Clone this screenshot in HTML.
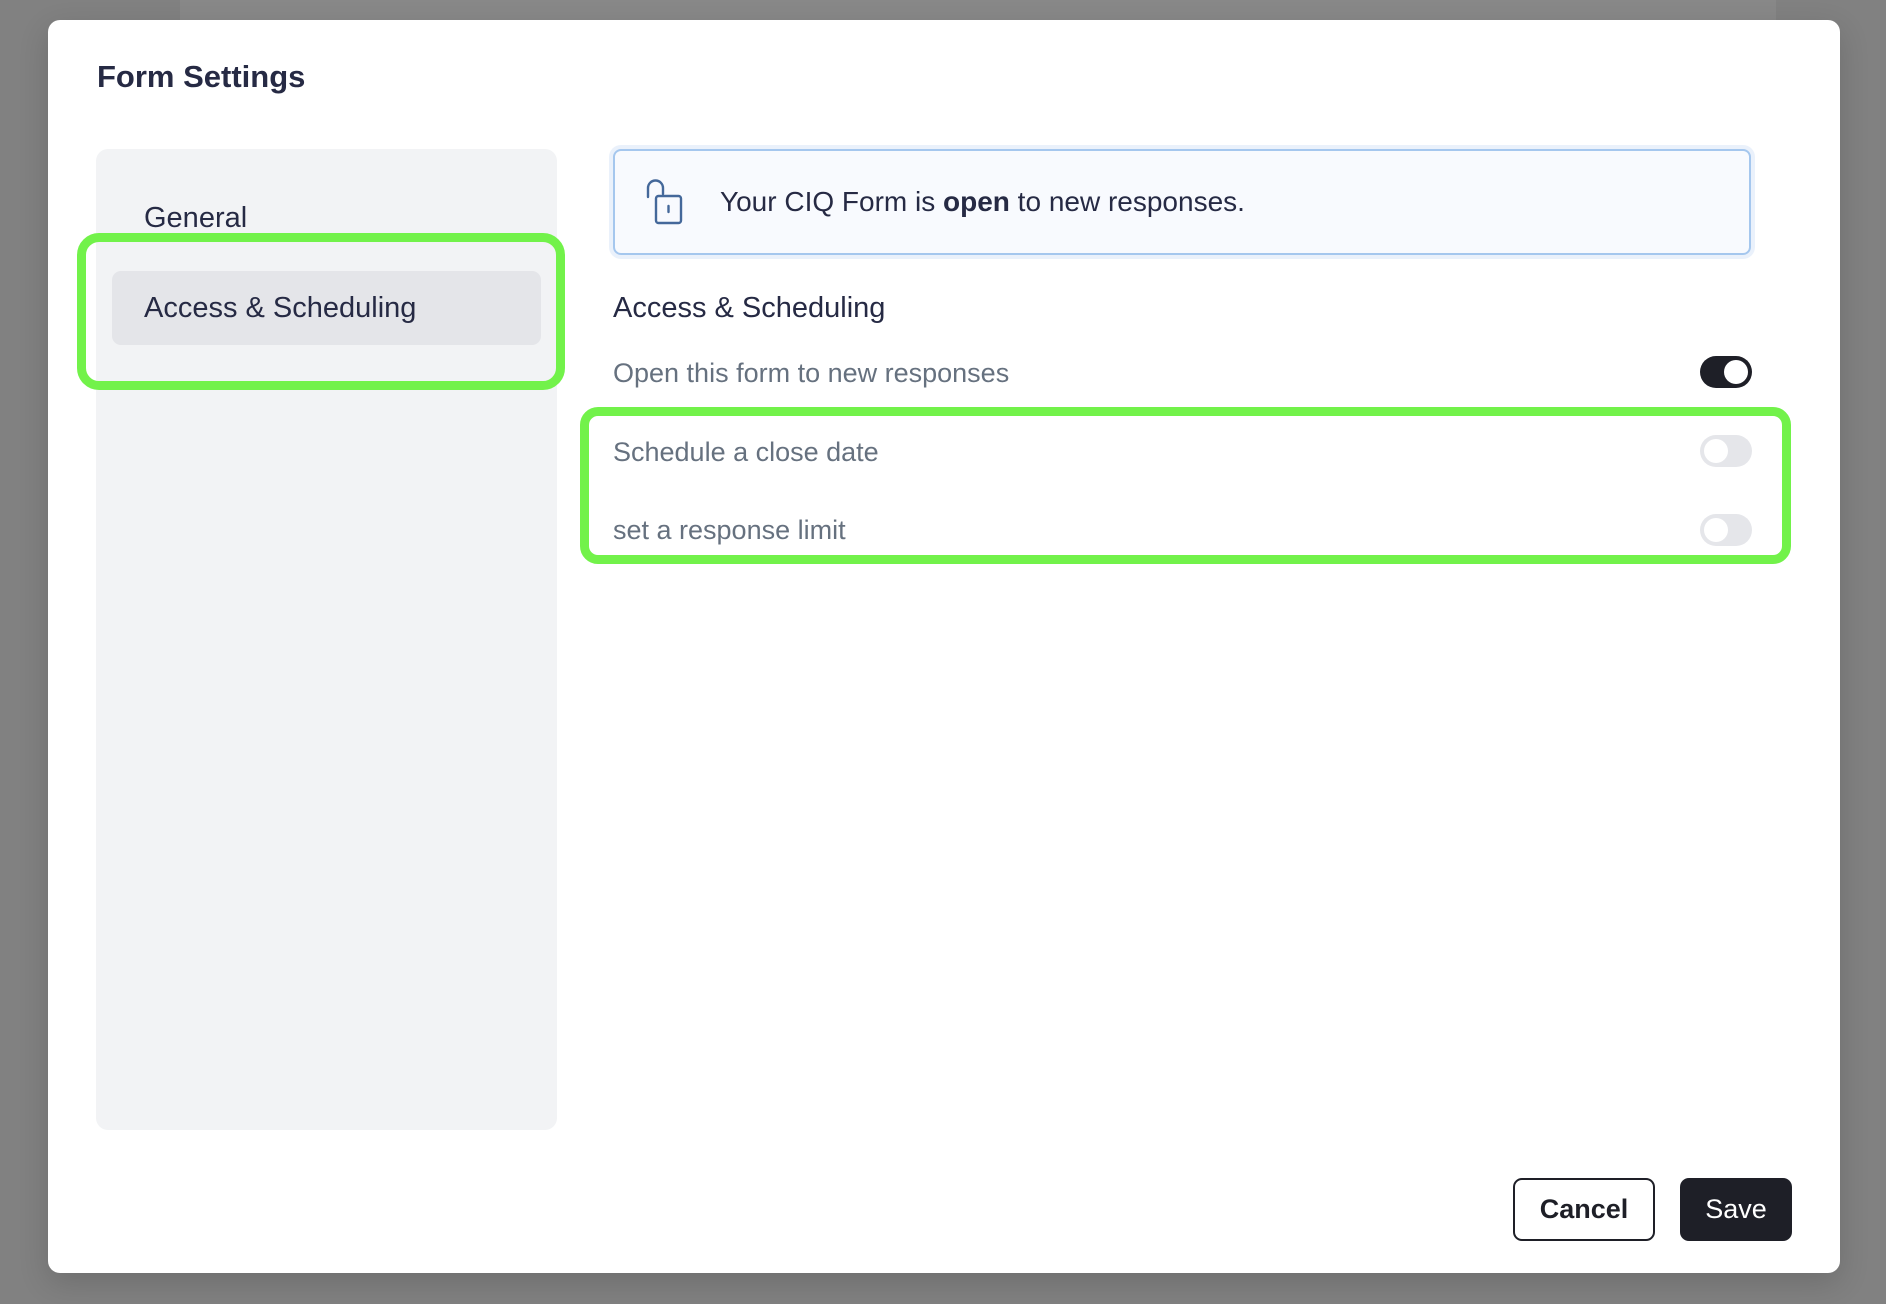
<!DOCTYPE html>
<html><head><meta charset="utf-8"><style>
*{margin:0;padding:0;box-sizing:border-box}
body{width:1886px;height:1304px;background:#818181;position:relative;overflow:hidden;font-family:"Liberation Sans",sans-serif;color:#262a44}
.strip{position:absolute;left:180px;top:0;width:1596px;height:30px;background:#888}
.modal{position:absolute;left:48px;top:20px;width:1792px;height:1253px;background:#fff;border-radius:12px;box-shadow:0 10px 30px rgba(0,0,0,.15)}
.abs{position:absolute}
.t{height:40px;line-height:40px;white-space:nowrap}
.title{left:97px;top:57px;font-size:31px;font-weight:bold;color:#262a44}
.side{left:96px;top:149px;width:461px;height:981px;background:#f2f3f5;border-radius:12px}
.sel{left:112px;top:271px;width:429px;height:74px;background:#e4e5e9;border-radius:9px}
.navt{font-size:29px;color:#262a44}
.green{border:9px solid #72f24a}
.banner{left:613px;top:149px;width:1138px;height:106px;background:#f8fafe;border:2px solid #a5c7ee;border-radius:8px;box-shadow:0 0 0 4px #eaf1fb}
.row{font-size:27px;color:#66717f}
.tog{width:52px;height:32px;border-radius:16px}
.on{background:#1e1f27}
.on::after{content:"";position:absolute;right:4px;top:4px;width:24px;height:24px;border-radius:50%;background:#fff}
.off{background:#e5e6ea}
.off::after{content:"";position:absolute;left:4px;top:4px;width:24px;height:24px;border-radius:50%;background:#fff}
.btn{top:1178px;height:63px;border-radius:9px;font-size:27px;font-weight:bold;display:flex;align-items:center;justify-content:center}
</style></head><body>
<div class="strip"></div>
<div class="modal"></div>
<div class="abs t title">Form Settings</div>
<div class="abs side"></div>
<div class="abs t navt" style="left:144px;top:198px">General</div>
<div class="abs sel"></div>
<div class="abs t navt" style="left:144px;top:288px">Access &amp; Scheduling</div>
<div class="abs green" style="left:77px;top:233px;width:488px;height:157px;border-radius:22px"></div>

<div class="abs banner"></div>
<svg class="abs" style="left:641px;top:178px" width="48" height="48" viewBox="0 0 40 48" fill="none" stroke="#44689a" stroke-width="2.4" stroke-linecap="round">
<path d="M3 19 V10 A7.5 7.5 0 0 1 18 10 V16"/>
<rect x="11" y="18" width="25" height="27" rx="2.5"/>
<path d="M23.5 28 V34"/>
</svg>
<div class="abs t" style="left:720px;top:182px;font-size:28px;color:#262a44">Your CIQ Form is <b>open</b> to new responses.</div>

<div class="abs t" style="left:613px;top:288px;font-size:29px;color:#262a44">Access &amp; Scheduling</div>
<div class="abs t row" style="left:613px;top:353px">Open this form to new responses</div>
<div class="abs tog on" style="left:1700px;top:356px"></div>
<div class="abs t row" style="left:613px;top:432px">Schedule a close date</div>
<div class="abs tog off" style="left:1700px;top:435px"></div>
<div class="abs t row" style="left:613px;top:510px">set a response limit</div>
<div class="abs tog off" style="left:1700px;top:514px"></div>
<div class="abs green" style="left:580px;top:407px;width:1211px;height:157px;border-radius:18px"></div>

<div class="abs btn" style="left:1513px;width:142px;border:2px solid #1e1f27;color:#1e1f27;background:#fff">Cancel</div>
<div class="abs btn" style="left:1680px;width:112px;background:#1e1f27;color:#fff;font-weight:normal">Save</div>
</body></html>
